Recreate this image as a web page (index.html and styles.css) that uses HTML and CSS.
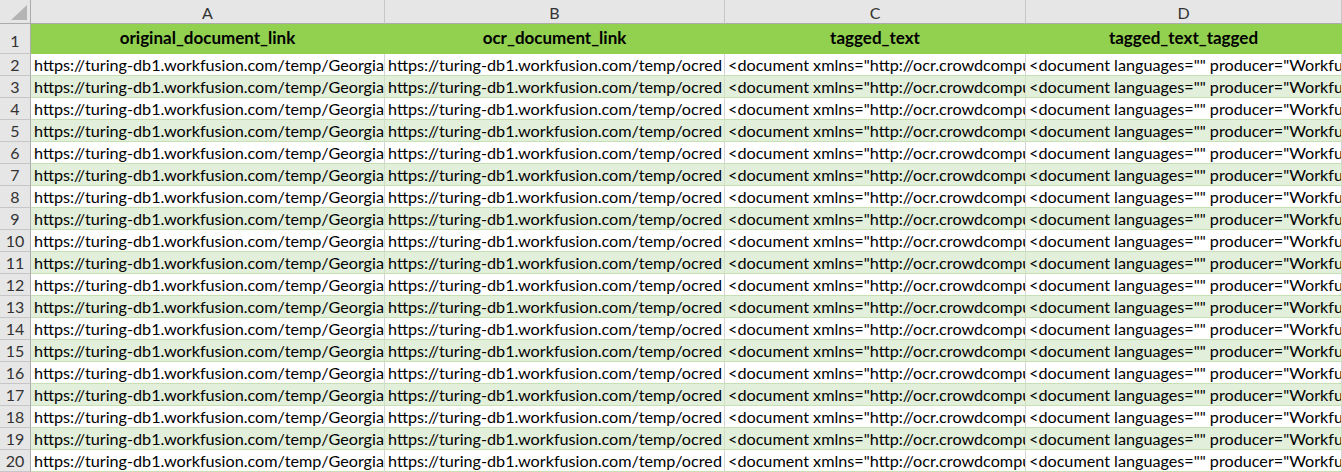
FILE: index.html
```html
<!DOCTYPE html>
<html>
<head>
    <title>tagged_documents.xlsx</title>
    <meta name="viewport" content="width=device-width, initial-scale=1.0">
    <link rel="stylesheet" href="styles.css">
</head>
<body>
    <div class="sheet">
        <!-- 열 머리글 -->
        <div class="corner">
            <svg width="16" height="15" viewBox="0 0 16 15"><polygon points="16,0 16,15 0,15" fill="#b4b4b4"/></svg>
        </div>
        <div class="col-head">A</div>
        <div class="col-head">B</div>
        <div class="col-head">C</div>
        <div class="col-head">D</div>

        <!-- 1행: 표 머리글 -->
        <div class="row-head first">1</div>
        <div class="cell title">original_document_link</div>
        <div class="cell title">ocr_document_link</div>
        <div class="cell title">tagged_text</div>
        <div class="cell title">tagged_text_tagged</div>

        <div class="row-head">2</div>
        <div class="cell">https://turing-db1.workfusion.com/temp/Georgia</div>
        <div class="cell">https://turing-db1.workfusion.com/temp/ocred</div>
        <div class="cell">&lt;document xmlns="http://ocr.crowdcompu</div>
        <div class="cell">&lt;document languages="" producer="Workfus</div>

        <div class="row-head">3</div>
        <div class="cell band">https://turing-db1.workfusion.com/temp/Georgia</div>
        <div class="cell band">https://turing-db1.workfusion.com/temp/ocred</div>
        <div class="cell band">&lt;document xmlns="http://ocr.crowdcompu</div>
        <div class="cell band">&lt;document languages="" producer="Workfus</div>

        <div class="row-head">4</div>
        <div class="cell">https://turing-db1.workfusion.com/temp/Georgia</div>
        <div class="cell">https://turing-db1.workfusion.com/temp/ocred</div>
        <div class="cell">&lt;document xmlns="http://ocr.crowdcompu</div>
        <div class="cell">&lt;document languages="" producer="Workfus</div>

        <div class="row-head">5</div>
        <div class="cell band">https://turing-db1.workfusion.com/temp/Georgia</div>
        <div class="cell band">https://turing-db1.workfusion.com/temp/ocred</div>
        <div class="cell band">&lt;document xmlns="http://ocr.crowdcompu</div>
        <div class="cell band">&lt;document languages="" producer="Workfus</div>

        <div class="row-head">6</div>
        <div class="cell">https://turing-db1.workfusion.com/temp/Georgia</div>
        <div class="cell">https://turing-db1.workfusion.com/temp/ocred</div>
        <div class="cell">&lt;document xmlns="http://ocr.crowdcompu</div>
        <div class="cell">&lt;document languages="" producer="Workfus</div>

        <div class="row-head">7</div>
        <div class="cell band">https://turing-db1.workfusion.com/temp/Georgia</div>
        <div class="cell band">https://turing-db1.workfusion.com/temp/ocred</div>
        <div class="cell band">&lt;document xmlns="http://ocr.crowdcompu</div>
        <div class="cell band">&lt;document languages="" producer="Workfus</div>

        <div class="row-head">8</div>
        <div class="cell">https://turing-db1.workfusion.com/temp/Georgia</div>
        <div class="cell">https://turing-db1.workfusion.com/temp/ocred</div>
        <div class="cell">&lt;document xmlns="http://ocr.crowdcompu</div>
        <div class="cell">&lt;document languages="" producer="Workfus</div>

        <div class="row-head">9</div>
        <div class="cell band">https://turing-db1.workfusion.com/temp/Georgia</div>
        <div class="cell band">https://turing-db1.workfusion.com/temp/ocred</div>
        <div class="cell band">&lt;document xmlns="http://ocr.crowdcompu</div>
        <div class="cell band">&lt;document languages="" producer="Workfus</div>

        <div class="row-head">10</div>
        <div class="cell">https://turing-db1.workfusion.com/temp/Georgia</div>
        <div class="cell">https://turing-db1.workfusion.com/temp/ocred</div>
        <div class="cell">&lt;document xmlns="http://ocr.crowdcompu</div>
        <div class="cell">&lt;document languages="" producer="Workfus</div>

        <div class="row-head">11</div>
        <div class="cell band">https://turing-db1.workfusion.com/temp/Georgia</div>
        <div class="cell band">https://turing-db1.workfusion.com/temp/ocred</div>
        <div class="cell band">&lt;document xmlns="http://ocr.crowdcompu</div>
        <div class="cell band">&lt;document languages="" producer="Workfus</div>

        <div class="row-head">12</div>
        <div class="cell">https://turing-db1.workfusion.com/temp/Georgia</div>
        <div class="cell">https://turing-db1.workfusion.com/temp/ocred</div>
        <div class="cell">&lt;document xmlns="http://ocr.crowdcompu</div>
        <div class="cell">&lt;document languages="" producer="Workfus</div>

        <div class="row-head">13</div>
        <div class="cell band">https://turing-db1.workfusion.com/temp/Georgia</div>
        <div class="cell band">https://turing-db1.workfusion.com/temp/ocred</div>
        <div class="cell band">&lt;document xmlns="http://ocr.crowdcompu</div>
        <div class="cell band">&lt;document languages="" producer="Workfus</div>

        <div class="row-head">14</div>
        <div class="cell">https://turing-db1.workfusion.com/temp/Georgia</div>
        <div class="cell">https://turing-db1.workfusion.com/temp/ocred</div>
        <div class="cell">&lt;document xmlns="http://ocr.crowdcompu</div>
        <div class="cell">&lt;document languages="" producer="Workfus</div>

        <div class="row-head">15</div>
        <div class="cell band">https://turing-db1.workfusion.com/temp/Georgia</div>
        <div class="cell band">https://turing-db1.workfusion.com/temp/ocred</div>
        <div class="cell band">&lt;document xmlns="http://ocr.crowdcompu</div>
        <div class="cell band">&lt;document languages="" producer="Workfus</div>

        <div class="row-head">16</div>
        <div class="cell">https://turing-db1.workfusion.com/temp/Georgia</div>
        <div class="cell">https://turing-db1.workfusion.com/temp/ocred</div>
        <div class="cell">&lt;document xmlns="http://ocr.crowdcompu</div>
        <div class="cell">&lt;document languages="" producer="Workfus</div>

        <div class="row-head">17</div>
        <div class="cell band">https://turing-db1.workfusion.com/temp/Georgia</div>
        <div class="cell band">https://turing-db1.workfusion.com/temp/ocred</div>
        <div class="cell band">&lt;document xmlns="http://ocr.crowdcompu</div>
        <div class="cell band">&lt;document languages="" producer="Workfus</div>

        <div class="row-head">18</div>
        <div class="cell">https://turing-db1.workfusion.com/temp/Georgia</div>
        <div class="cell">https://turing-db1.workfusion.com/temp/ocred</div>
        <div class="cell">&lt;document xmlns="http://ocr.crowdcompu</div>
        <div class="cell">&lt;document languages="" producer="Workfus</div>

        <div class="row-head">19</div>
        <div class="cell band">https://turing-db1.workfusion.com/temp/Georgia</div>
        <div class="cell band">https://turing-db1.workfusion.com/temp/ocred</div>
        <div class="cell band">&lt;document xmlns="http://ocr.crowdcompu</div>
        <div class="cell band">&lt;document languages="" producer="Workfus</div>

        <div class="row-head">20</div>
        <div class="cell">https://turing-db1.workfusion.com/temp/Georgia</div>
        <div class="cell">https://turing-db1.workfusion.com/temp/ocred</div>
        <div class="cell">&lt;document xmlns="http://ocr.crowdcompu</div>
        <div class="cell">&lt;document languages="" producer="Workfus</div>
    </div>
</body>
</html>
```

FILE: styles.css
```css
* {
    margin: 0;
    padding: 0;
    box-sizing: border-box;
    font-family: 'Lato', 'Open Sans', sans-serif;
}

body {
    background: white;
    overflow: hidden;
}

.sheet {
    display: grid;
    grid-template-columns: 31px 354px 340px 301px 316px;
    grid-template-rows: 24px 30px repeat(19, 22px);
    width: max-content;
}

/* 머리글 (열 문자, 행 번호) */
.corner,
.col-head,
.row-head {
    background: #e6e6e6;
    color: #333;
    font-size: 16px;
    border-right: 1px solid #c6c6c6;
    border-bottom: 1px solid #c6c6c6;
}

.corner {
    display: flex;
    align-items: flex-end;
    justify-content: flex-end;
    padding: 0 3px 3px 0;
    border-bottom-color: #ababab;
    border-right-color: #ababab;
}

.col-head {
    display: flex;
    align-items: center;
    justify-content: center;
    padding-top: 1px;
    border-bottom-color: #ababab;
}

.row-head {
    display: flex;
    align-items: flex-end;
    justify-content: center;
    padding-bottom: 1px;
    border-right-color: #ababab;
}

.row-head.first {
    padding-bottom: 3px;
}

/* 데이터 셀 */
.cell {
    font-size: 16.2px;
    color: #000;
    white-space: nowrap;
    overflow: hidden;
    padding: 0 0 1px 3px;
    display: flex;
    align-items: flex-end;
    border-right: 1px solid #d4d4d4;
    border-bottom: 1px solid #c6e0b4;
}

.cell.band {
    background: #e2efda;
    border-right-color: #d0dfc6;
}

.cell.title {
    background: #92d050;
    font-size: 17px;
    font-weight: 700;
    justify-content: center;
    padding: 0 0 5px 0;
    border-right-color: #92d050;
    border-bottom-color: #92d050;
}
```
